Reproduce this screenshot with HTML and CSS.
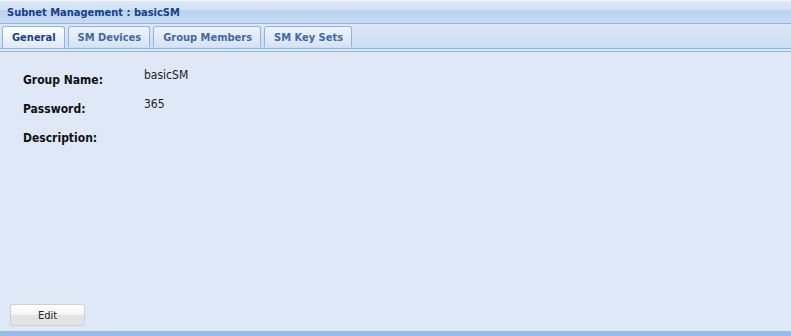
FILE: index.html
```html
<!DOCTYPE html>
<html lang="en">
<head>
  <meta charset="UTF-8" />
  <title>Subnet Management</title>
  <link rel="stylesheet" href="styles.css">
</head>
<body>
  <div class="panel">
    <div class="panel-header">Subnet Management : basicSM</div>
    <div class="tab-strip">
      <a href="#" class="tab active">General</a>
      <a href="#" class="tab">SM Devices</a>
      <a href="#" class="tab">Group Members</a>
      <a href="#" class="tab">SM Key Sets</a>
    </div>
    <div class="tab-body">
      <div class="fields">
        <div class="field">
          <span class="label">Group Name:</span>
          <span class="value">basicSM</span>
        </div>
        <div class="field">
          <span class="label">Password:</span>
          <span class="value">365</span>
        </div>
        <div class="field">
          <span class="label">Description:</span>
          <span class="value"></span>
        </div>
      </div>
      <div class="toolbar">
        <button class="btn">Edit</button>
      </div>
    </div>
  </div>
</body>
</html>
```

FILE: styles.css
```css
body {
  margin: 0;
  font-family: "DejaVu Sans Condensed", "DejaVu Sans", Tahoma, sans-serif;
  font-size: 11px;
  background-color: #dfe8f6;
}
.panel {
  height: 336px;
  display: flex;
  flex-direction: column;
  box-sizing: border-box;
  border-bottom: 5px solid #99bbe8;
  border-top: 1px solid #f3f7fc;
}
.panel-header {
  height: 23px;
  box-sizing: border-box;
  padding: 5px 7px 0 7px;
  font-weight: bold;
  color: #15428b;
  background: linear-gradient(#dce7f5, #d2e1f3 9px, #b2cdee 10px, #bcd3f0 11px, #c9dbf3);
  border-bottom: 1px solid #8fb5e3;
}
.tab-strip {
  display: flex;
  gap: 3px;
  height: 25px;
  box-sizing: border-box;
  padding: 2px 0 0 2px;
  background: linear-gradient(#dde8f6, #ccddf3);
  border-bottom: 1px solid #8fb5e3;
}
.tab {
  display: block;
  box-sizing: border-box;
  height: 21px;
  padding: 4px 8px 0 9px;
  border: 1px solid #8fb5e3;
  border-bottom: none;
  border-radius: 3px 3px 0 0;
  background: linear-gradient(#eef3fa, #d6e3f4);
  color: #416aa3;
  font-weight: bold;
  text-decoration: none;
}
.tab.active {
  height: 22px;
  margin-bottom: -1px;
  background: linear-gradient(#ffffff, #dfe8f6);
  color: #15428b;
}
.tab-body {
  flex: 1;
  display: flex;
  flex-direction: column;
  border-top: 2px solid #dfe8f6;
  box-shadow: inset 0 1px 0 #8fb5e3;
  padding: 17px 0 0 0;
}
.fields {
  flex: 1;
  padding-left: 23px;
}
.field {
  display: flex;
  height: 29px;
}
.label {
  width: 121px;
  padding-top: 5px;
  font-size: 12px;
  font-weight: bold;
  color: #111;
}
.value {
  color: #222;
  font-size: 12px;
}
.toolbar {
  padding: 0 0 5px 10px;
}
.btn {
  width: 75px;
  height: 22px;
  font-family: "DejaVu Sans Condensed", "DejaVu Sans", Tahoma, sans-serif;
  font-size: 11px;
  color: #222;
  border: 1px solid #d0d0d0;
  border-radius: 3px;
  background: linear-gradient(#ffffff, #f4f4f4 50%, #e4e4e4 51%, #e4e4e4);
  cursor: pointer;
}
```
